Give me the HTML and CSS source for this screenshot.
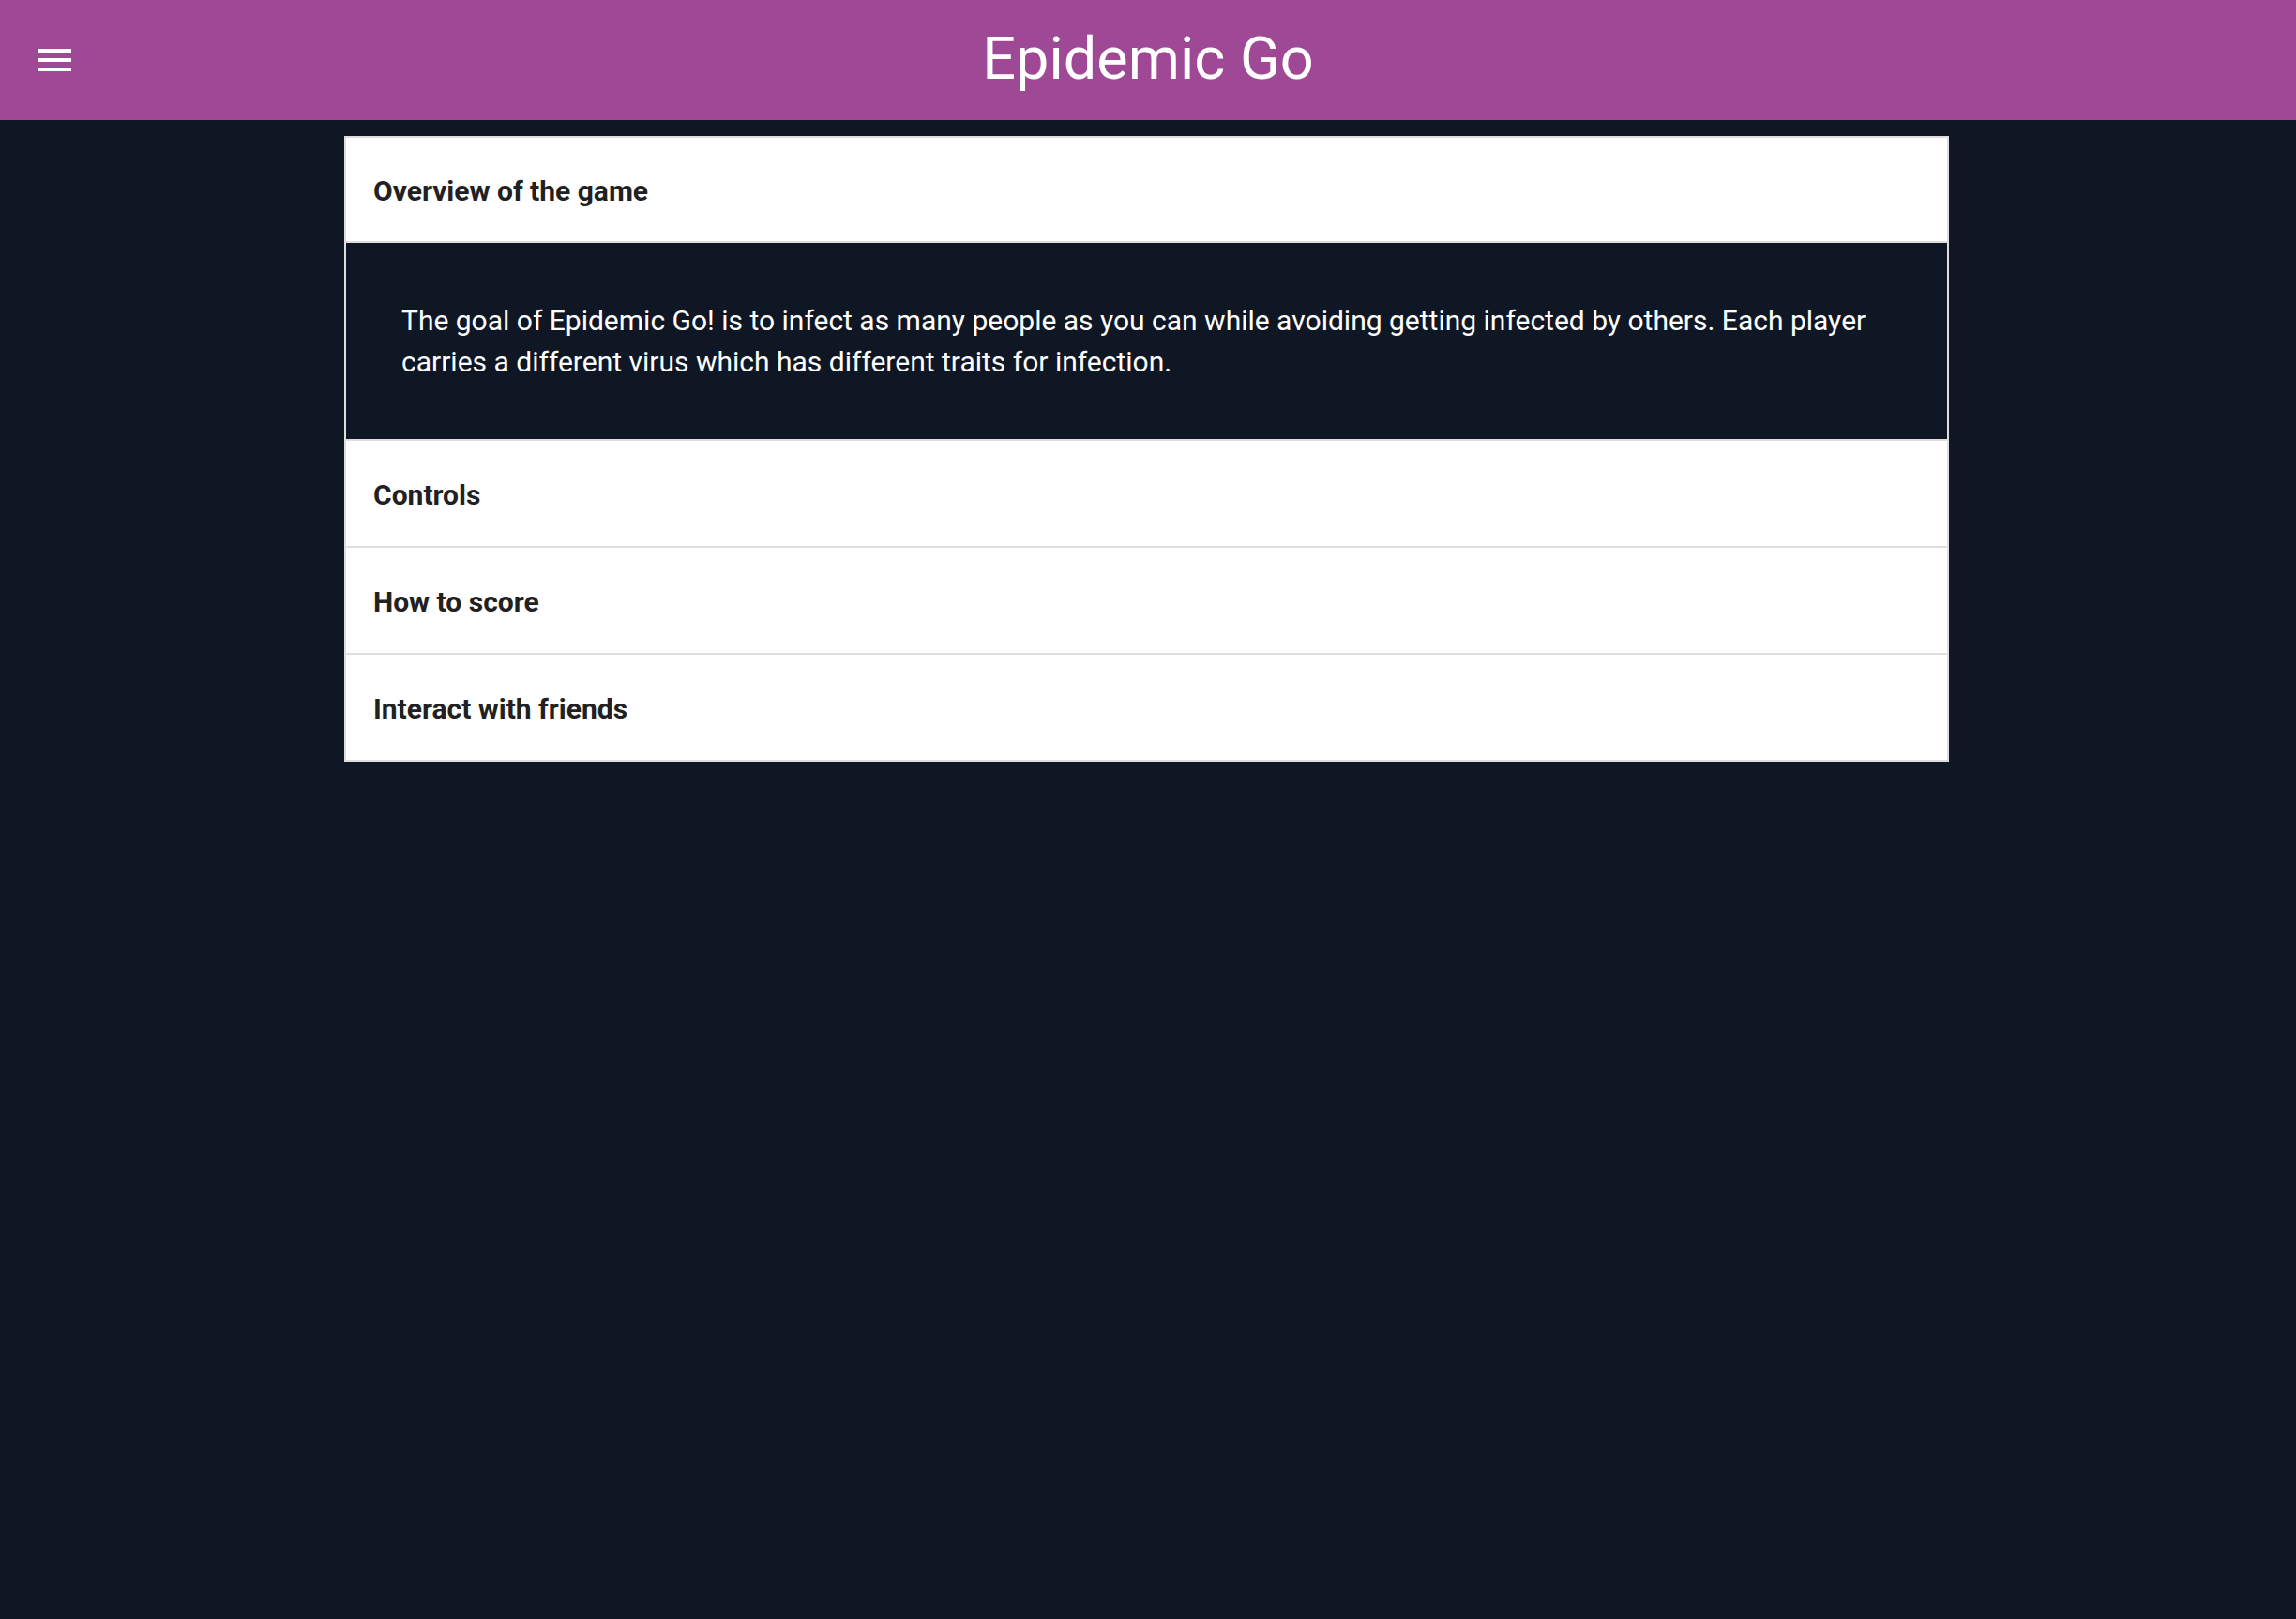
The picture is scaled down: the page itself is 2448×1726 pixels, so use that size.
FILE: index.html
```html
<!DOCTYPE html>
<html lang="en">
<head>
    <meta charset="UTF-8">
    <meta name="viewport" content="width=device-width, initial-scale=1.0">
    <title>Epidemic Go</title>
    <link rel="stylesheet" href="styles.css">
</head>
<body>

    <header class="app-bar">
        <button class="menu-btn" aria-label="Menu">
            <svg viewBox="0 0 24 24" width="48" height="48">
                <path d="M3 18h18v-2H3v2zm0-5h18v-2H3v2zm0-7v2h18V6H3z" fill="#ffffff"/>
            </svg>
        </button>
        <h1 class="app-title">Epidemic Go</h1>
        <div></div>
    </header>

    <main class="guide">
        <!-- Overview is open -->
        <section class="panel open">
            <div class="panel-head">Overview of the game</div>
            <div class="panel-body">
                <p>The goal of Epidemic Go! is to infect as many people as you can while avoiding getting infected by others. Each player carries a different virus which has different traits for infection.</p>
            </div>
        </section>

        <section class="panel">
            <div class="panel-head">Controls</div>
        </section>

        <section class="panel">
            <div class="panel-head">How to score</div>
        </section>

        <section class="panel">
            <div class="panel-head">Interact with friends</div>
        </section>
    </main>

</body>
</html>
```

FILE: styles.css
```css
* {
    margin: 0;
    padding: 0;
    box-sizing: border-box;
}

body {
    font-family: Roboto, 'Noto Sans', sans-serif;
    background: #0f1624;
    min-height: 100vh;
    padding-right: 3px;
}

.app-bar {
    height: 128px;
    background: #9f4996;
    display: grid;
    grid-template-columns: 1fr auto 1fr;
    align-items: center;
    padding: 0 34px;
    margin-right: -3px;
}

.menu-btn {
    width: 48px;
    height: 48px;
    background: none;
    border: none;
    cursor: pointer;
    display: flex;
    justify-self: start;
}

.app-title {
    color: white;
    font-size: 63px;
    font-weight: 400;
    line-height: 1;
    margin-top: -4px;
}

.guide {
    width: 1711px;
    margin: 17px auto 0;
    border: 2px solid #dedede;
    background: white;
}

.panel {
    border-bottom: 2px solid #dedede;
}

.panel:last-child {
    border-bottom: none;
}

.panel-head {
    height: 112px;
    display: flex;
    align-items: center;
    padding: 2px 29px 0;
    font-size: 30px;
    font-weight: 700;
    color: #212121;
}

.panel.open .panel-head {
    height: 112px;
    border-bottom: 2px solid #dedede;
}

.panel-body {
    background: #0f1624;
    color: white;
    padding: 61px 59px 60px;
    font-size: 30px;
    line-height: 44px;
}
```
